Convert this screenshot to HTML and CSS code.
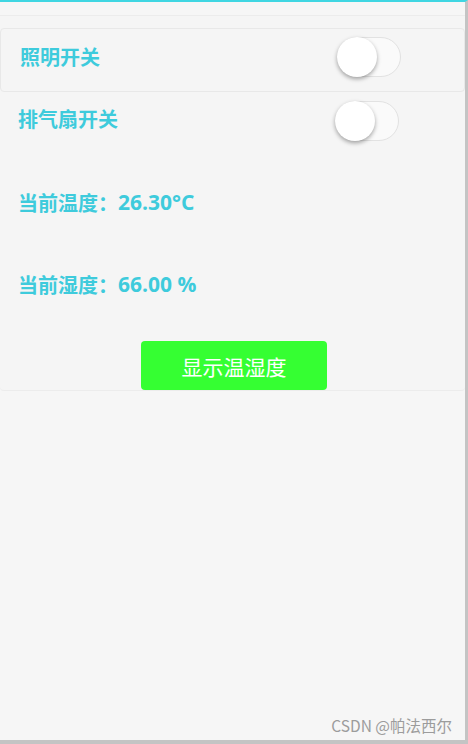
FILE: index.html
```html
<!DOCTYPE html>
<html>
<head>
  <meta charset="UTF-8">
  <title>温湿度控制</title>
  <link rel="stylesheet" href="styles.css">
</head>
<body>
<div class="frame">
  <div class="card">
    <div class="row row-boxed">
      <span class="label">照明开关</span>
      <div class="switch"><div class="knob"></div></div>
    </div>
    <div class="row row-fan">
      <span class="label">排气扇开关</span>
      <div class="switch"><div class="knob"></div></div>
    </div>
    <div class="reading reading-temp">当前温度：<span class="num">26.30°C</span></div>
    <div class="reading reading-hum">当前湿度：<span class="num">66.00 %</span></div>
    <button class="show-btn">显示温湿度</button>
  </div>
  <div class="watermark">CSDN @帕法西尔</div>
</div>
</body>
</html>
```

FILE: styles.css
```css
body {
  margin: 0;
  background: #f6f6f6;
  font-family: "Open Sans", "Noto Sans CJK SC", sans-serif;
}

.frame {
  box-sizing: border-box;
  width: 468px;
  height: 744px;
  border-top: 2px solid #3fd6e2;
  border-right: 3px solid #c4c4c4;
  border-bottom: 4px solid #c4c4c4;
  display: flex;
  flex-direction: column;
}

.card {
  margin-top: 13px;
  padding-top: 12px;
  border-top: 1px solid #ececec;
  border-bottom: 1px solid #ececec;
  background: #f5f5f5;
  border-radius: 0 0 4px 4px;
}

.row {
  display: flex;
  align-items: center;
  justify-content: space-between;
}

.row-boxed {
  box-sizing: border-box;
  height: 64px;
  padding: 0 63px 7px 19px;
  border: 1px solid #e8e8e8;
  border-radius: 4px;
}

.row-fan {
  margin-top: 8px;
  height: 42px;
  padding: 0 66px 0 18px;
}

.row-fan .label {
  margin-bottom: 5px;
}

.label, .reading {
  color: #3ecbdc;
  font-size: 20px;
  font-weight: 700;
}

.num {
  font-size: 21px;
}

.switch {
  box-sizing: border-box;
  width: 64px;
  height: 40px;
  border: 1px solid #e2e2e2;
  border-radius: 20px;
  background: #fafafa;
  display: flex;
  align-items: center;
}

.knob {
  width: 40px;
  height: 40px;
  margin-left: -1px;
  border-radius: 50%;
  background: #fff;
  box-shadow: 0 2px 4px rgba(0, 0, 0, 0.35);
}

.reading {
  display: flex;
  align-items: center;
  height: 40px;
  padding-left: 18px;
}

.reading-temp { margin-top: 40px; }
.reading-hum { margin-top: 42px; }

.show-btn {
  display: block;
  margin: 37px 0 0 141px;
  width: 186px;
  height: 49px;
  border: none;
  border-radius: 4px;
  background: #35ff32;
  color: #fff;
  font-family: "Noto Sans CJK SC", sans-serif;
  font-size: 21px;
}

.watermark {
  margin-top: auto;
  align-self: flex-end;
  margin-right: 13px;
  margin-bottom: 4px;
  color: #9c9c9c;
  font-family: "Noto Sans CJK SC", sans-serif;
  font-size: 15.5px;
}
```
